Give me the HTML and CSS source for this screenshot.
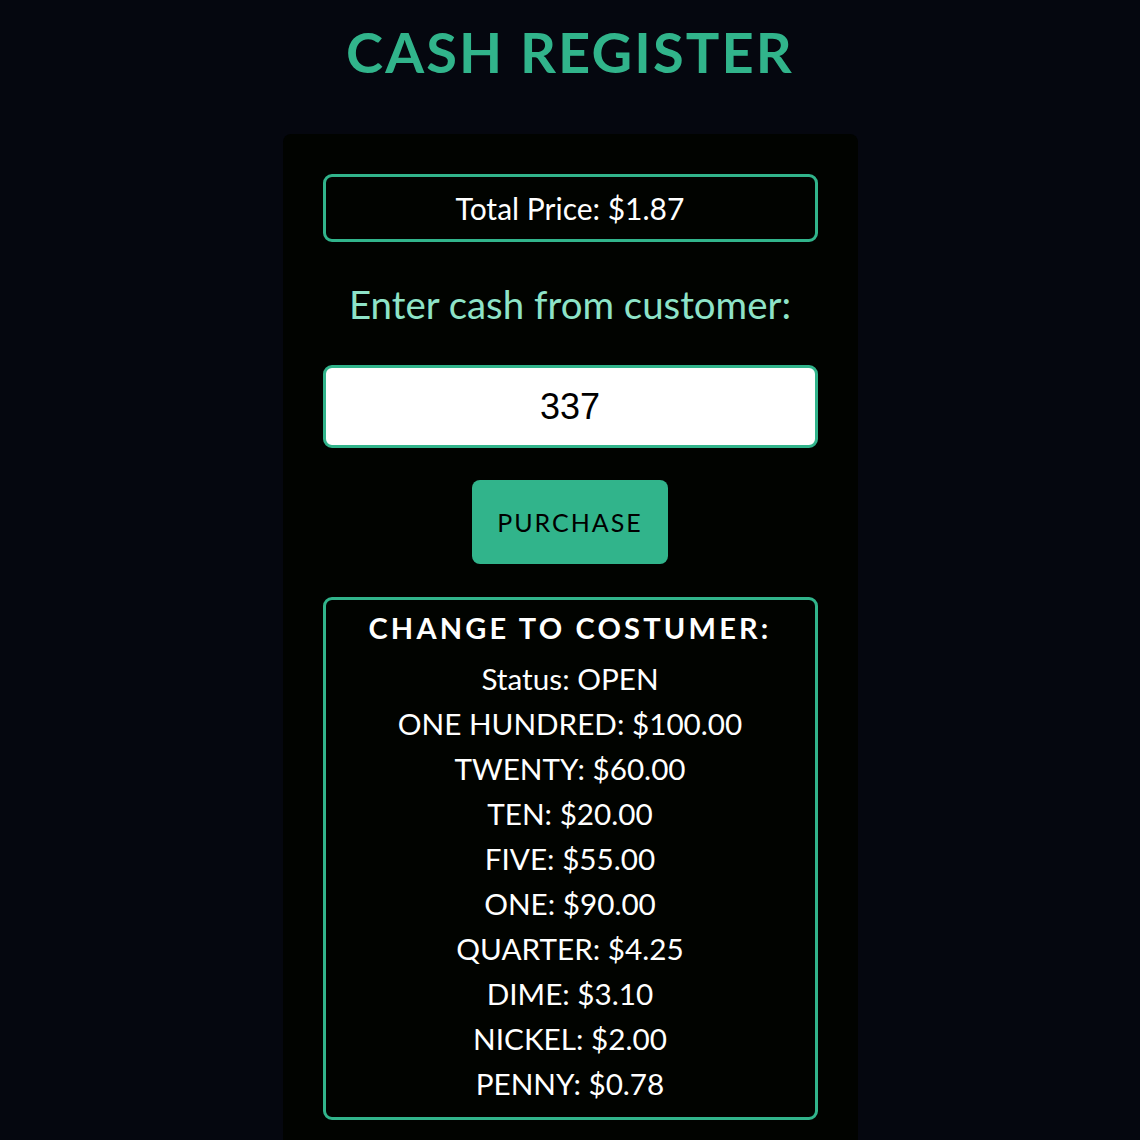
FILE: index.html
```html
<!DOCTYPE html>
<html lang="en">
<head>
<meta charset="utf-8">
<title>Cash Register</title>
<link rel="stylesheet" href="styles.css">
</head>
<body>
<main class="page">
  <h1 class="title">CASH REGISTER</h1>
  <section class="card">
    <div class="total">Total Price: $1.87</div>
    <label class="prompt" for="cash">Enter cash from customer:</label>
    <input class="cash" id="cash" type="number" value="337">
    <button class="purchase" type="button">PURCHASE</button>
    <div class="change">
      <h2 class="change-title">CHANGE TO COSTUMER:</h2>
      <p class="line">Status: OPEN</p>
      <p class="line">ONE HUNDRED: $100.00</p>
      <p class="line">TWENTY: $60.00</p>
      <p class="line">TEN: $20.00</p>
      <p class="line">FIVE: $55.00</p>
      <p class="line">ONE: $90.00</p>
      <p class="line">QUARTER: $4.25</p>
      <p class="line">DIME: $3.10</p>
      <p class="line">NICKEL: $2.00</p>
      <p class="line">PENNY: $0.78</p>
    </div>
  </section>
</main>
</body>
</html>
```
FILE: styles.css
```css
html, body {
  margin: 0;
  padding: 0;
  background: #05070f;
}
body {
  font-family: "Lato", "Liberation Sans", sans-serif;
  color: #ffffff;
}
.page {
  display: flex;
  flex-direction: column;
  align-items: center;
}
.title {
  margin: 0;
  padding-top: 18px;
  font-family: "Lato", sans-serif;
  font-weight: 700;
  font-size: 56px;
  line-height: 1.2;
  letter-spacing: 2.1px;
  color: #31b48b;
}
.card {
  margin-top: 49px;
  width: 495px;
  padding: 40px;
  background: #010300;
  border-radius: 8px;
  display: flex;
  flex-direction: column;
  align-items: center;
}
.total {
  box-sizing: border-box;
  width: 100%;
  height: 68px;
  border: 3px solid #31b48b;
  border-radius: 9px;
  font-size: 30px;
  line-height: 62px;
  text-align: center;
}
.prompt {
  margin: 39px 0 38px;
  font-size: 38.4px;
  line-height: 1.2;
  color: #8ee3c8;
}
.cash {
  box-sizing: border-box;
  width: 100%;
  height: 83px;
  margin: 0;
  border: 3px solid #31b48b;
  border-radius: 9px;
  background: #ffffff;
  color: #000000;
  font-family: "Liberation Sans", Arial, sans-serif;
  font-size: 36px;
  text-align: center;
  padding: 0;
  outline: none;
  -moz-appearance: textfield;
}
.cash::-webkit-outer-spin-button,
.cash::-webkit-inner-spin-button {
  -webkit-appearance: none;
  margin: 0;
}
.purchase {
  margin-top: 32px;
  width: 196px;
  height: 84px;
  border: none;
  border-radius: 8px;
  background: #31b48b;
  color: #000000;
  font-family: "Lato", sans-serif;
  font-size: 25px;
  letter-spacing: 2px;
  padding: 0;
}
.change {
  box-sizing: border-box;
  width: 100%;
  margin-top: 33px;
  border: 3px solid #31b48b;
  border-radius: 9px;
  padding: 6px 0 11px;
  text-align: center;
}
.change-title {
  margin: 0 0 6px;
  font-family: "Lato", sans-serif;
  font-weight: 700;
  font-size: 29px;
  line-height: 1.5;
  letter-spacing: 3.2px;
}
.line {
  margin: 0;
  font-size: 29.7px;
  line-height: 45px;
}
```
